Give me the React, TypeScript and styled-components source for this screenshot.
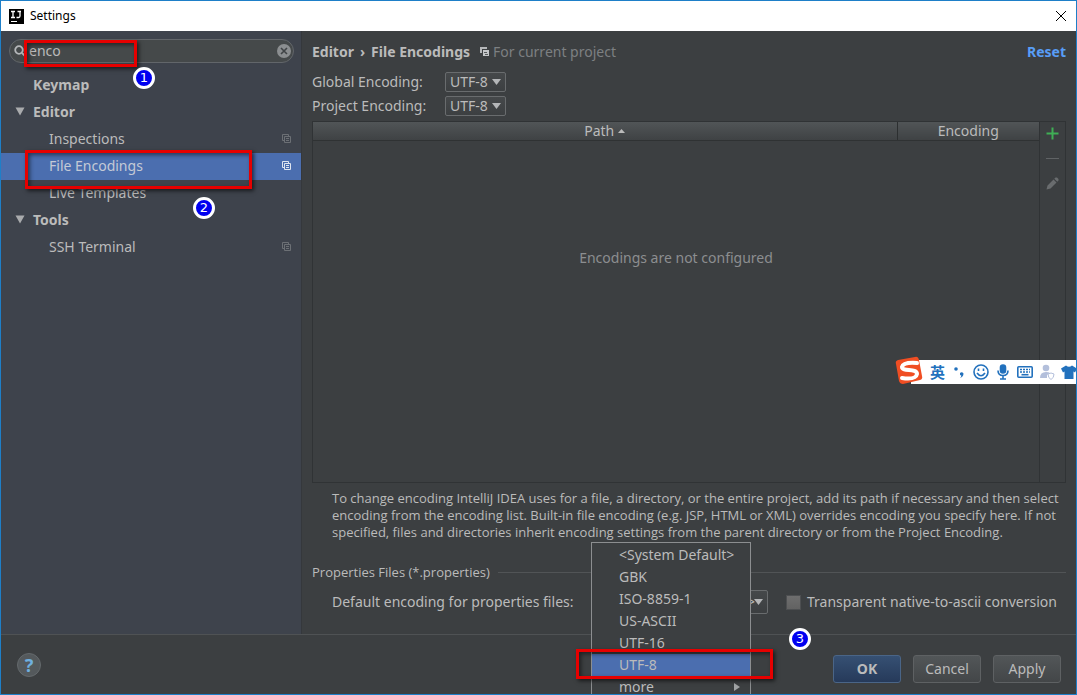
import React from "react";
import styled, { createGlobalStyle, css } from "styled-components";

const GlobalStyle = createGlobalStyle`
  *, *::before, *::after { box-sizing: border-box; }
  body { margin: 0; background: #3c3f41; }
  button, input, select { font: inherit; color: inherit; margin: 0; }
  h1, h2, p, ul { margin: 0; padding: 0; font: inherit; }
  ul { list-style: none; }
`;

const Window = styled.div`
  position: relative;
  display: flex;
  flex-direction: column;
  min-height: 100vh;
  overflow: hidden;
  border: 1px solid #1e7fc8;
  background: #3c3f41;
  color: #bbbbbb;
  font: 14px/20px "Noto Sans", "Noto Sans CJK SC", sans-serif;
`;

const TitleBar = styled.header`
  display: flex;
  align-items: center;
  gap: 6px;
  height: 30px;
  padding: 0 9px 0 8px;
  background: #ffffff;
  color: #000000;
  font-size: 12px;
`;

const WindowTitle = styled.h1`
  flex: 1;
`;

const IconButton = styled.button`
  display: flex;
  align-items: center;
  justify-content: center;
  padding: 0;
  border: 0;
  background: none;
`;

const Body = styled.div`
  display: flex;
  flex: 1;
`;

const Sidebar = styled.nav`
  flex: none;
  width: 301px;
  padding-top: 8px;
  background: #3e434c;
  border-right: 1px solid #35383c;
`;

const SearchField = styled.div`
  position: relative;
  display: flex;
  align-items: center;
  gap: 3px;
  height: 24px;
  margin: 0 7px 9px 8px;
  padding: 0 2px 0 4px;
  border: 1px solid #62666a;
  border-radius: 12px;
  background: #45494a;
`;

const SearchInput = styled.input`
  flex: 1;
  min-width: 0;
  padding: 0;
  border: 0;
  outline: 0;
  background: none;
`;

const TreeRow = styled.li<{ $level: 0 | 1; $selected?: boolean }>`
  position: relative;
  display: flex;
  align-items: center;
  height: 27px;
  padding: 0 10px 2px ${(p) => (p.$level ? 48 : 14)}px;
  font-weight: ${(p) => (p.$level ? 400 : 700)};
  background: ${(p) => (p.$selected ? "#4b6eaf" : "transparent")};
  color: ${(p) => (p.$selected ? "#c4cad6" : "#bbbbbb")};
`;

const Twisty = styled.span`
  display: flex;
  width: 18px;
`;

const TreeLink = styled.a`
  flex: 1;
  color: inherit;
  text-decoration: none;
`;

const Callout = styled.div<{ $top: number; $left: number; $width: number; $height: number }>`
  position: absolute;
  z-index: 3;
  top: ${(p) => p.$top}px;
  left: ${(p) => p.$left}px;
  width: ${(p) => p.$width}px;
  height: ${(p) => p.$height}px;
  border: 3px solid #e60000;
  box-shadow: 2px 2px 4px rgba(0, 0, 0, 0.6), inset 2px 2px 4px rgba(0, 0, 0, 0.5);
  pointer-events: none;
`;

const Badge = styled.span<{ $top: number; $left: number }>`
  position: absolute;
  z-index: 3;
  top: ${(p) => p.$top}px;
  left: ${(p) => p.$left}px;
  width: 22px;
  height: 22px;
  border: 3px solid #ffffff;
  border-radius: 50%;
  background: #0000f0;
  color: #ffffff;
  font: 13px/16px "DejaVu Sans", sans-serif;
  text-align: center;
`;

const Content = styled.main`
  display: flex;
  flex: 1;
  flex-direction: column;
  min-width: 0;
  padding: 0 10px;
`;

const Heading = styled.div`
  display: flex;
  align-items: center;
  height: 39px;
  padding-top: 2px;
`;

const Breadcrumb = styled.h2`
  display: flex;
  flex: none;
  gap: 6px;
  margin-right: 10px;
  font-weight: 700;
`;

const Scope = styled.span`
  display: flex;
  flex: 1;
  align-items: center;
  gap: 4px;
  color: #7d8082;
`;

const ResetLink = styled.a`
  color: #589df6;
  font-weight: 700;
  text-decoration: none;
`;

const FieldRow = styled.div`
  display: flex;
  align-items: center;
  height: 24px;
`;

const FieldLabel = styled.label`
  width: 133px;
`;

const SelectBox = styled.span`
  position: relative;
  display: flex;
`;

const Select = styled.select<{ $wide?: boolean }>`
  appearance: none;
  width: ${(p) => (p.$wide ? 177 : 61)}px;
  height: ${(p) => (p.$wide ? 24 : 20)}px;
  padding: ${(p) => (p.$wide ? "0 12px 0 4px" : "0 4px")};
  border: 1px solid #696c6e;
  border-radius: 2px;
  background: linear-gradient(#45484a, #3c3f41);
  line-height: 18px;
  text-align-last: ${(p) => (p.$wide ? "right" : "left")};
`;

const SelectArrow = styled.svg`
  position: absolute;
  top: calc(50% - 3px);
  right: 5px;
  pointer-events: none;
`;

const TableArea = styled.div`
  display: flex;
  flex: 1;
  margin: 3px 0 7px;
  border: 1px solid #303335;
`;

const TableHolder = styled.div`
  flex: 1;
`;

const Table = styled.table`
  width: 100%;
  border-collapse: collapse;
  table-layout: fixed;
`;

const HeaderCell = styled.th<{ $width?: number }>`
  ${(p) => p.$width && css`width: ${p.$width}px; border-left: 1px solid #2c2f30;`}
  height: 18px;
  padding: 0;
  border-bottom: 1px solid #2f3233;
  background: linear-gradient(#515557, #3f4244);
  font-weight: 400;
  line-height: 17px;
`;

const SortArrow = styled.svg`
  margin-left: 4px;
  vertical-align: 3px;
`;

const EmptyCell = styled.td`
  padding: 107px 0 0;
  color: #8c8e90;
  text-align: center;
`;

const Tools = styled.div`
  display: flex;
  flex: none;
  flex-direction: column;
  align-items: center;
  width: 26px;
  border-left: 1px solid #303335;
`;

const ToolButton = styled(IconButton)`
  width: 24px;
  height: 25px;
  padding-bottom: 3px;
`;

const Hint = styled.p`
  padding-left: 20px;
  font-family: "Open Sans", sans-serif;
  font-size: 13px;
  line-height: 17px;
  white-space: nowrap;
`;

const Group = styled.fieldset`
  min-width: 0;
  margin: 21px 0 12px;
  padding: 0;
  border: 0;
`;

const GroupTitle = styled.legend`
  display: flex;
  align-items: center;
  gap: 8px;
  width: 100%;
  padding: 0;
  font-family: "Open Sans", sans-serif;
  font-size: 13px;

  &::after {
    content: "";
    flex: 1;
    height: 1px;
    background: #515456;
  }
`;

const GroupRow = styled.div`
  display: flex;
  align-items: center;
  height: 40px;
  padding-left: 20px;
  white-space: nowrap;
`;

const PropertiesLabel = styled.label`
  width: 259px;
`;

const CheckLabel = styled.label`
  display: flex;
  align-items: center;
  gap: 6px;
  margin-left: 18px;
`;

const Checkbox = styled.input`
  appearance: none;
  width: 15px;
  height: 15px;
  border: 1px solid #4d4f51;
  background: linear-gradient(#6e6e6e, #626262);
`;

const Menu = styled.ul`
  position: absolute;
  z-index: 2;
  top: -48px;
  left: 0;
  width: 160px;
  padding: 1px 0;
  border: 1px solid #8c8e90;
  background: #3c3f41;
`;

const MenuItem = styled.li`
  position: relative;
`;

const MenuButton = styled.button<{ $selected?: boolean }>`
  display: flex;
  align-items: center;
  justify-content: space-between;
  width: 100%;
  height: 22px;
  padding: 0 10px 0 27px;
  border: 0;
  background: ${(p) => (p.$selected ? "#4b6eaf" : "transparent")};
  text-align: left;
`;

const Footer = styled.footer`
  position: relative;
  display: flex;
  align-items: center;
  gap: 12px;
  height: 60px;
  padding: 8px 15px 0 16px;
  border-top: 1px solid #4f5254;
`;

const HelpButton = styled(IconButton)`
  width: 24px;
  height: 24px;
  margin: 0 auto 8px 0;
  border: 1px solid #64696c;
  border-radius: 50%;
  background: #54595c;
  color: #6fafdf;
  font-size: 18px;
  font-weight: 700;
`;

const DialogButton = styled.button<{ $primary?: boolean }>`
  width: 68px;
  height: 28px;
  padding: 0;
  border: 1px solid ${(p) => (p.$primary ? "#4a6587" : "#5e6163")};
  border-radius: 3px;
  background: ${(p) => (p.$primary ? "linear-gradient(#365073, #263a5a)" : "linear-gradient(#525658, #434648)")};
  font-weight: ${(p) => (p.$primary ? 700 : 400)};
`;

const InputBar = styled.div`
  position: absolute;
  z-index: 4;
  top: 359px;
  right: -1px;
  display: flex;
  align-items: center;
  gap: 6px;
  width: 166px;
  height: 24px;
  padding-left: 19px;
  background: #ffffff;
  color: #2271bd;
`;

const InputMode = styled.span`
  font: 700 15px/24px "Noto Sans CJK SC", sans-serif;
`;

const SogouLogo = styled.svg`
  position: absolute;
  top: -4px;
  left: -16px;
`;

const Glyph = styled.svg`
  flex: none;
`;

const Down = () => (
  <SelectArrow width="9" height="6" viewBox="0 0 9 6" aria-hidden="true">
    <path d="M0 0H9L4.5 6Z" fill="#b4b6b8" />
  </SelectArrow>
);

const PagesIcon = ({ color }: { color: string }) => (
  <Glyph width="9" height="9" viewBox="0 0 9 9" fill="none" stroke={color} aria-hidden="true">
    <path d="M2.5 6.5H.5V.5H6.5V2.5M2.5 2.5H8.5V8.5H2.5ZM4 4.5H7M4 6.5H7" />
  </Glyph>
);

const ScopeIcon = () => (
  <Glyph width="9" height="9" viewBox="0 0 9 9" aria-hidden="true">
    <path d="M0 0H7V2H2V6H0Z" fill="#b5b7b9" />
    <path d="M3 3H9V9H3Z" fill="#c5c7c9" />
    <path d="M4 5.5H7M5 7.5H8" stroke="#55585a" />
  </Glyph>
);

const TreeArrow = () => (
  <svg width="10" height="9" viewBox="0 0 10 9" aria-hidden="true">
    <path d="M.5 .5H9.5L5 8.5Z" fill="#a9abad" />
  </svg>
);

type Node = { name: string; level: 0 | 1; open?: boolean; scoped?: boolean; selected?: boolean };

const nodes: Node[] = [
  { name: "Keymap", level: 0 },
  { name: "Editor", level: 0, open: true },
  { name: "Inspections", level: 1, scoped: true },
  { name: "File Encodings", level: 1, scoped: true, selected: true },
  { name: "Live Templates", level: 1 },
  { name: "Tools", level: 0, open: true },
  { name: "SSH Terminal", level: 1, scoped: true },
];

const encodings = ["<System Default>", "GBK", "ISO-8859-1", "US-ASCII", "UTF-16", "UTF-8", "more"];

export default function App() {
  return (
    <>
      <GlobalStyle />
      <Window>
        <TitleBar>
          <Glyph width="15" height="15" viewBox="0 0 15 15" aria-hidden="true">
            <rect width="15" height="15" fill="#000" />
            <path d="M2 2.5H6M4 2.5V8.5M2 8.5H6M8.5 2.5H12M11 2.5V7Q11 8.5 9.5 8.5H7.5" stroke="#fff" strokeWidth="1.3" fill="none" />
            <path d="M2 12.5H8" stroke="#fff" />
          </Glyph>
          <WindowTitle>Settings</WindowTitle>
          <IconButton aria-label="Close">
            <Glyph width="12" height="12" viewBox="0 0 12 12" stroke="#000" aria-hidden="true">
              <path d="M1 1L11 11M11 1L1 11" />
            </Glyph>
          </IconButton>
        </TitleBar>

        <Body>
          <Sidebar>
            <SearchField>
              <Glyph width="12" height="12" viewBox="0 0 12 12" fill="none" stroke="#b5b7b9" strokeWidth="1.8" aria-hidden="true">
                <circle cx="5" cy="5" r="3.8" />
                <path d="M8 8L11.3 11.3" />
              </Glyph>
              <SearchInput aria-label="Search settings" defaultValue="enco" />
              <IconButton aria-label="Clear search">
                <Glyph width="14" height="14" viewBox="0 0 14 14" aria-hidden="true">
                  <circle cx="7" cy="7" r="7" fill="#8b8e90" />
                  <path d="M4 4L10 10M10 4L4 10" stroke="#404446" strokeWidth="1.6" />
                </Glyph>
              </IconButton>
              <Callout $top={0} $left={14} $width={113} $height={27} />
              <Badge $top={27} $left={123}>1</Badge>
            </SearchField>
            <ul>
              {nodes.map((n) => (
                <TreeRow key={n.name} $level={n.level} $selected={n.selected}>
                  {n.level === 0 && <Twisty>{n.open && <TreeArrow />}</Twisty>}
                  <TreeLink href="#">{n.name}</TreeLink>
                  {n.scoped && <PagesIcon color={n.selected ? "#dfe5ef" : "#6c7075"} />}
                  {n.selected && (
                    <>
                      <Callout $top={-3} $left={24} $width={227} $height={39} />
                      <Badge $top={44} $left={192}>2</Badge>
                    </>
                  )}
                </TreeRow>
              ))}
            </ul>
          </Sidebar>

          <Content>
            <Heading>
              <Breadcrumb>
                <span>Editor</span>
                <span>›</span>
                <span>File Encodings</span>
              </Breadcrumb>
              <Scope>
                <ScopeIcon />
                For current project
              </Scope>
              <ResetLink href="#">Reset</ResetLink>
            </Heading>
            <FieldRow>
              <FieldLabel htmlFor="global-encoding">Global Encoding:</FieldLabel>
              <SelectBox>
                <Select id="global-encoding"><option>UTF-8</option></Select>
                <Down />
              </SelectBox>
            </FieldRow>
            <FieldRow>
              <FieldLabel htmlFor="project-encoding">Project Encoding:</FieldLabel>
              <SelectBox>
                <Select id="project-encoding"><option>UTF-8</option></Select>
                <Down />
              </SelectBox>
            </FieldRow>

            <TableArea>
              <TableHolder>
                <Table>
                  <thead>
                    <tr>
                      <HeaderCell>
                        Path
                        <SortArrow width="7" height="4" viewBox="0 0 7 4" aria-hidden="true">
                          <path d="M0 4H7L3.5 0Z" fill="#bbbbbb" />
                        </SortArrow>
                      </HeaderCell>
                      <HeaderCell $width={142}>Encoding</HeaderCell>
                    </tr>
                  </thead>
                  <tbody>
                    <tr>
                      <EmptyCell colSpan={2}>Encodings are not configured</EmptyCell>
                    </tr>
                  </tbody>
                </Table>
              </TableHolder>
              <Tools>
                <ToolButton aria-label="Add">
                  <Glyph width="13" height="13" viewBox="0 0 13 13" aria-hidden="true">
                    <path d="M6.5 .5V12.5M.5 6.5H12.5" stroke="#3fae55" strokeWidth="2" />
                  </Glyph>
                </ToolButton>
                <ToolButton aria-label="Remove">
                  <Glyph width="13" height="13" viewBox="0 0 13 13" aria-hidden="true">
                    <path d="M0 6.5H13" stroke="#606365" />
                  </Glyph>
                </ToolButton>
                <ToolButton aria-label="Edit">
                  <Glyph width="13" height="13" viewBox="0 0 13 13" fill="#696c6e" aria-hidden="true">
                    <path d="M.5 12.5L1.5 8.5L7.5 2.5L10.5 5.5L4.5 11.5ZM8.3 1.7L9.5 .5H11L12.5 2V3.5L11.3 4.7Z" />
                  </Glyph>
                </ToolButton>
              </Tools>
            </TableArea>

            <Hint>
              To change encoding IntelliJ IDEA uses for a file, a directory, or the entire project, add its path if necessary and then select
              <br />
              encoding from the encoding list. Built-in file encoding (e.g. JSP, HTML or XML) overrides encoding you specify here. If not
              <br />
              specified, files and directories inherit encoding settings from the parent directory or from the Project Encoding.
            </Hint>

            <Group>
              <GroupTitle>Properties Files (*.properties)</GroupTitle>
              <GroupRow>
                <PropertiesLabel htmlFor="properties-encoding">Default encoding for properties files:</PropertiesLabel>
                <SelectBox>
                  <Select id="properties-encoding" $wide><option>&lt;System Default&gt;</option></Select>
                  <Down />
                  <Menu role="menu">
                    {encodings.map((e) => (
                      <MenuItem key={e} role="none">
                        <MenuButton role="menuitem" $selected={e === "UTF-8"}>
                          {e}
                          {e === "more" && (
                            <Glyph width="6" height="8" viewBox="0 0 6 8" aria-hidden="true">
                              <path d="M0 0L6 4L0 8Z" fill="#a0a2a4" />
                            </Glyph>
                          )}
                        </MenuButton>
                        {e === "UTF-8" && (
                          <>
                            <Callout $top={-5} $left={-16} $width={197} $height={30} />
                            <Badge $top={-26} $left={197}>3</Badge>
                          </>
                        )}
                      </MenuItem>
                    ))}
                  </Menu>
                </SelectBox>
                <CheckLabel>
                  <Checkbox type="checkbox" />
                  Transparent native-to-ascii conversion
                </CheckLabel>
              </GroupRow>
            </Group>
          </Content>
        </Body>

        <Footer>
          <HelpButton aria-label="Help">?</HelpButton>
          <DialogButton $primary>OK</DialogButton>
          <DialogButton>Cancel</DialogButton>
          <DialogButton>Apply</DialogButton>
        </Footer>

        <InputBar>
          <SogouLogo width="29" height="29" viewBox="0 0 29 29" aria-hidden="true">
            <path d="M3 4Q0 5 1 8L4 25Q5 28 8 28L25 24Q28 23 27 20L24 4Q23 0 20 1Z" fill="#f04e23" />
            <path d="M22 7Q8 6 7 11C7 16 22 12 22 18Q21 24 7 22" fill="none" stroke="#fff" strokeWidth="4" strokeLinecap="round" />
          </SogouLogo>
          <InputMode>英</InputMode>
          <Glyph width="16" height="16" viewBox="0 0 16 16" aria-hidden="true">
            <circle cx="5" cy="5" r="1.8" fill="#2271bd" />
            <path d="M9 9Q11 7.5 12.5 9.5Q12.5 12.5 9 14Q10.5 12.5 10.3 11.5Q8.5 11.5 9 9Z" fill="#2271bd" />
          </Glyph>
          <Glyph width="16" height="16" viewBox="0 0 16 16" fill="none" stroke="#2271bd" strokeWidth="1.6" aria-hidden="true">
            <circle cx="8" cy="8" r="7" />
            <path d="M5.5 4.5V7M10.5 4.5V7M4 9Q8 14.5 12 9" />
          </Glyph>
          <Glyph width="16" height="16" viewBox="0 0 16 16" fill="none" stroke="#2271bd" strokeWidth="1.6" aria-hidden="true">
            <rect x="5.5" y="1" width="5" height="8" rx="2.5" fill="#2271bd" />
            <path d="M3 6.5Q3 11.5 8 11.5Q13 11.5 13 6.5M8 11.5V15M5 15H11" />
          </Glyph>
          <Glyph width="16" height="16" viewBox="0 0 16 16" fill="none" stroke="#2271bd" strokeWidth="1.6" aria-hidden="true">
            <rect x=".8" y="2.8" width="14.4" height="10.4" rx="1" />
            <path d="M3 5.5H13M3 8H13" strokeDasharray="2 1" />
            <path d="M4.5 10.7H11.5" />
          </Glyph>
          <Glyph width="16" height="16" viewBox="0 0 16 16" fill="#b3bfdb" aria-hidden="true">
            <circle cx="7" cy="4" r="3.3" />
            <path d="M1 14Q1 8 7 8Q10 8 11 9L8 11V14Z" />
            <path d="M9 10L12 9L15 10Q15 14 12 15.5Q9 14 9 10Z" fill="#fff" stroke="#b3bfdb" />
          </Glyph>
          <Glyph width="16" height="16" viewBox="0 0 16 16" fill="#2271bd" aria-hidden="true">
            <path d="M5 1.5Q8 4 11 1.5L16 4.5L14 8.5L12.5 7.5V15H3.5V7.5L2 8.5L0 4.5Z" />
          </Glyph>
        </InputBar>
      </Window>
    </>
  );
}
